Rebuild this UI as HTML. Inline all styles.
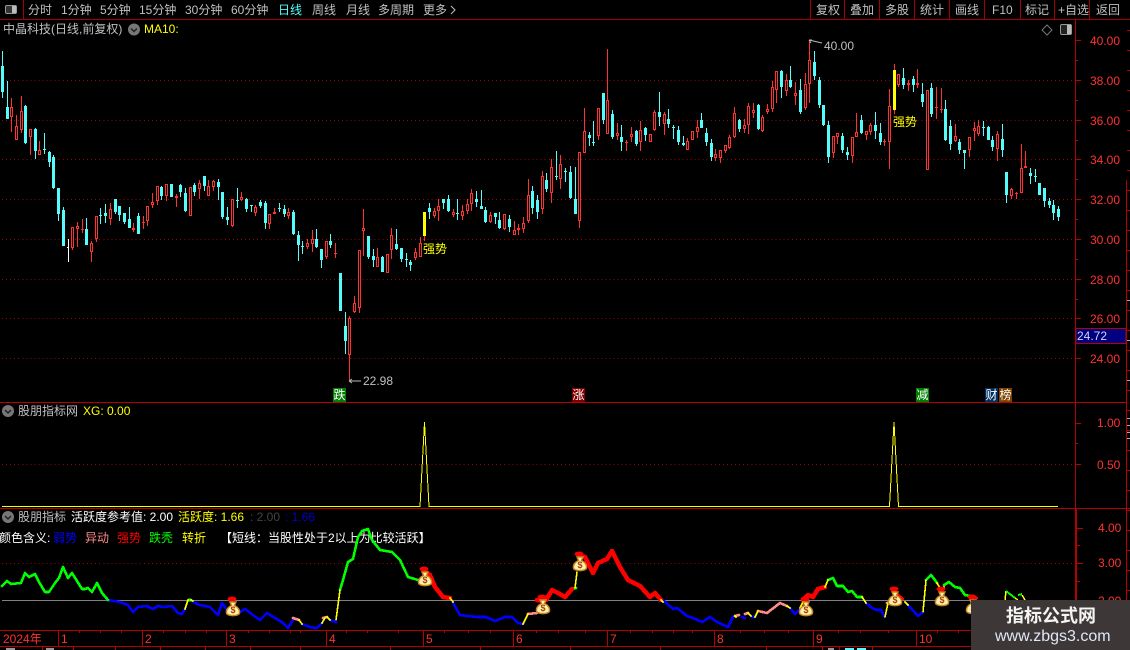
<!DOCTYPE html>
<html><head><meta charset="utf-8"><title>中晶科技</title>
<style>
html,body{margin:0;padding:0;background:#000;width:1130px;height:650px;overflow:hidden}
svg{display:block}
text{font-family:"Liberation Sans","WenQuanYi Zen Hei","Noto Sans CJK SC",sans-serif;font-size:12px;fill:#c0c0c0}
.p{fill:#ff3232}
.y{fill:#ffff00}
.w{fill:#fff}
</style></head><body>
<svg width="1130" height="650" viewBox="0 0 1130 650" xmlns="http://www.w3.org/2000/svg">
<rect width="1130" height="650" fill="#000"/>
<defs>
<g id="c"><circle r="6" fill="#777"/><path d="M-3 -1L0 2L3 -1" fill="none" stroke="#222" stroke-width="1.5"/></g>
<g id="b"><ellipse cx="-1" cy="-10" rx="4.5" ry="2.4" fill="#f00"/><path d="M-3 -7H3L1.5 -3.5C5 -2 7 1 6.5 4C6 7.5 -6 7.5 -6.5 4C-7 1 -5 -2 -1.5 -3.5Z" fill="#fff0b0" stroke="#c8861c" stroke-width="1.4"/></g>
</defs>

<!-- toolbar -->
<g shape-rendering="crispEdges" stroke="#a80000" fill="none">
<path d="M0 19.5H1130M23.5 0V19M810.5 0V19M844.5 0V19M879.5 0V19M914.5 0V19M949.5 0V19M984.5 0V19M1020.5 0V19M1054.5 0V19M1089.5 0V19"/>
</g>
<rect x="5.5" y="5.5" width="11" height="8" rx="1.5" fill="#333" stroke="#999"/><rect x="12" y="6" width="4" height="7" fill="#bbb"/>
<text x="28" y="14">分时</text><text x="61" y="14">1分钟</text><text x="100" y="14">5分钟</text><text x="139" y="14">15分钟</text><text x="185" y="14">30分钟</text><text x="231" y="14">60分钟</text>
<text x="278" y="14" fill="#54fcfc" style="fill:#54fcfc">日线</text><text x="312" y="14">周线</text><text x="346" y="14">月线</text><text x="378" y="14">多周期</text><text x="423" y="14">更多</text>
<path d="M451 6L455 10L451 14" fill="none" stroke="#c0c0c0"/>
<text x="816" y="14">复权</text><text x="850" y="14">叠加</text><text x="885" y="14">多股</text><text x="920" y="14">统计</text><text x="955" y="14">画线</text><text x="992" y="14">F10</text><text x="1025" y="14">标记</text><text x="1058" y="14">+自选</text><text x="1096" y="14">返回</text>

<!-- header -->
<text x="3" y="33">中晶科技(日线,前复权)</text>
<use href="#c" x="134" y="29.5"/>
<text x="144" y="33" class="y">MA10:</text>
<path d="M1047 25L1052 30L1047 35L1042 30Z" fill="none" stroke="#777"/>
<rect x="1060.5" y="24.5" width="11" height="10" rx="1.5" fill="#222" stroke="#999"/><rect x="1067" y="25" width="4" height="9" fill="#bbb"/>

<!-- grid -->
<g fill="none" stroke="#a00000" stroke-dasharray="1 3.05" shape-rendering="crispEdges">
<path d="M2 80.5H1075M2 120.5H1075M2 159.5H1075M2 199.5H1075M2 239.5H1075M2 279.5H1075M2 318.5H1075M2 358.5H1075M2 464.5H1075M2 563.5H1075"/>
</g>
<path d="M2 600.5H971" stroke="#808080" shape-rendering="crispEdges"/>

<!-- frame -->
<g fill="none" stroke="#b80000" shape-rendering="crispEdges">
<path d="M1075.5 20V508M1126.5 180V630M0 402.5H1126M0 508.5H1130M0 630.5H971M0 646.5H971"/>
<path stroke-width="2" d="M1076 508V630"/>
<path d="M1075 40.5h6M1075 60.5h3M1075 80.5h6M1075 100.5h3M1075 120.5h6M1075 140.5h3M1075 159.5h6M1075 179.5h3M1075 199.5h6M1075 219.5h3M1075 239.5h6M1075 259.5h3M1075 279.5h6M1075 299.5h3M1075 318.5h6M1075 358.5h6M1075 423.5h6M1075 443.5h3M1075 464.5h6M1077 528.5h6M1077 545.5h3M1077 563.5h6M1077 581.5h3M1077 600.5h6"/>
<path stroke-dasharray="1 19" stroke-width="3" d="M1128.5 30V600"/>
<path d="M58.5 630V646M142.5 630V646M226.5 630V646M326.5 630V646M423.5 630V646M513.5 630V646M607.5 630V646M714.5 630V646M813.5 630V646M916.5 630V646"/>
<path d="M79.5 631v2M100.5 631v2M121.5 631v2M163.5 631v2M185.5 631v2M206.5 631v2M248.5 631v2M269.5 631v2M290.5 631v2M300.5 631v2M346.5 631v2M367.5 631v2M398.5 631v2M444.5 631v2M468.5 631v2M490.5 631v2M536.5 631v2M558.5 631v2M585.5 631v2M630.5 631v2M652.5 631v2M673.5 631v2M692.5 631v2M740.5 631v2M764.5 631v2M788.5 631v2M838.5 631v2M860.5 631v2M888.5 631v2M937.5 631v2M958.5 631v2"/>
<path d="M42.5 647v3M73.5 647v3M115.5 647v3M160.5 647v3M205.5 647v3M250.5 647v3M300.5 647v3M390.5 647v3M480.5 647v3M570.5 647v3M660.5 647v3M766.5 647v3M822.5 647v3M839.5 647v3M872.5 647v3"/>
</g>
<path d="M1127 418.5h3M1127 425.5h3M1127 432.5h3M1127 438.5h3M1127 380.5h3M1127 340.5h3M1127 300.5h3" stroke="#aaa" shape-rendering="crispEdges"/>
<g shape-rendering="crispEdges"><rect x="6" y="648" width="9" height="2" fill="#999"/><rect x="46" y="648" width="8" height="2" fill="#999"/><rect x="828" y="648" width="6" height="2" fill="#999"/><rect x="845" y="648" width="9" height="2" fill="#54fcfc"/><rect x="857" y="648" width="9" height="2" fill="#54fcfc"/></g>

<!-- cyan candles -->
<path shape-rendering="crispEdges" fill="#54fcfc" stroke="#54fcfc" d="M2.5 51V98M1.5 66.5h2V91.5h-2zM7.5 81V119M6.5 107.5h2V118.5h-2zM25.5 105V144M24.5 106.5h2V142.5h-2zM35.5 128V159M34.5 129.5h2V150.5h-2zM44.5 133V154M43 149.5h3M49.5 151V167M48.5 152.5h2V161.5h-2zM53.5 155V189M52.5 157.5h2V187.5h-2zM58.5 188V221M57.5 188.5h2V213.5h-2zM63.5 207V246M62.5 210.5h2V245.5h-2zM86.5 218V245M85.5 229.5h2V244.5h-2zM100.5 208V224M99 215.5h3M105.5 204V223M104.5 213.5h2V215.5h-2zM115.5 199V214M114.5 199.5h2V211.5h-2zM119.5 206V221M118.5 206.5h2V214.5h-2zM124.5 213V224M123.5 213.5h2V221.5h-2zM129.5 207V228M128.5 219.5h2V227.5h-2zM138.5 213V234M137.5 216.5h2V233.5h-2zM161.5 186V200M160.5 187.5h2V195.5h-2zM171.5 184V197M170.5 184.5h2V196.5h-2zM180.5 184V197M179.5 185.5h2V191.5h-2zM185.5 188V212M184.5 193.5h2V210.5h-2zM194.5 183V196M193.5 185.5h2V191.5h-2zM204.5 176V191M203.5 176.5h2V185.5h-2zM218.5 179V200M217.5 182.5h2V186.5h-2zM222.5 192V219M221.5 192.5h2V216.5h-2zM227.5 207V225M226.5 217.5h2V219.5h-2zM237.5 188V208M236 200.5h3M246.5 198V212M245.5 199.5h2V208.5h-2zM251.5 205V212M250 205.5h3M260.5 200V208M259.5 202.5h2V205.5h-2zM265.5 201V229M264.5 203.5h2V222.5h-2zM279.5 203V212M278 208.5h3M284.5 205V217M283.5 209.5h2V213.5h-2zM293.5 210V235M292.5 212.5h2V233.5h-2zM298.5 231V261M297.5 235.5h2V244.5h-2zM302.5 241V254M301 246.5h3M316.5 229V248M315.5 239.5h2V246.5h-2zM321.5 249V268M320.5 249.5h2V259.5h-2zM330.5 234V248M329.5 241.5h2V244.5h-2zM340.5 273V311M339.5 273.5h2V310.5h-2zM345.5 312V354M344.5 326.5h2V340.5h-2zM368.5 236V259M367.5 236.5h2V256.5h-2zM373.5 249V267M372.5 256.5h2V259.5h-2zM382.5 256V272M381.5 257.5h2V271.5h-2zM396.5 229V250M395.5 244.5h2V248.5h-2zM401.5 248V262M400.5 248.5h2V258.5h-2zM406.5 253V267M405 259.5h3M410.5 260V271M409.5 262.5h2V264.5h-2zM429.5 203V219M428.5 208.5h2V211.5h-2zM443.5 199V209M442.5 199.5h2V202.5h-2zM448.5 195V212M447.5 199.5h2V210.5h-2zM457.5 199V220M456 213.5h3M476.5 191V207M475.5 199.5h2V201.5h-2zM481.5 190V209M480.5 206.5h2V208.5h-2zM485.5 207V223M484.5 210.5h2V221.5h-2zM495.5 213V224M494.5 213.5h2V216.5h-2zM499.5 212V229M498.5 220.5h2V227.5h-2zM509.5 215V232M508.5 219.5h2V226.5h-2zM532.5 186V214M531.5 191.5h2V207.5h-2zM537.5 195V219M536.5 200.5h2V211.5h-2zM546.5 173V192M545.5 180.5h2V188.5h-2zM556.5 151V180M555 176.5h3M565.5 168V182M564 171.5h3M570.5 166V199M569.5 172.5h2V197.5h-2zM575.5 167V214M574.5 199.5h2V213.5h-2zM589.5 132V146M588.5 135.5h2V137.5h-2zM593.5 121V146M592 142.5h3M603.5 93V124M602.5 93.5h2V119.5h-2zM612.5 110V139M611.5 114.5h2V136.5h-2zM621.5 125V151M620.5 137.5h2V141.5h-2zM636.5 130V146M635.5 131.5h2V143.5h-2zM645.5 127V141M644.5 128.5h2V134.5h-2zM659.5 92V126M658.5 112.5h2V116.5h-2zM668.5 109V128M667.5 119.5h2V123.5h-2zM673.5 125V139M672 127.5h3M678.5 126V145M677.5 130.5h2V141.5h-2zM683.5 136V146M682.5 143.5h2V144.5h-2zM701.5 113V128M700.5 120.5h2V127.5h-2zM706.5 128V146M705.5 133.5h2V141.5h-2zM711.5 139V161M710.5 143.5h2V156.5h-2zM739.5 119V132M738.5 120.5h2V128.5h-2zM758.5 104V130M757.5 105.5h2V128.5h-2zM781.5 70V98M780.5 71.5h2V86.5h-2zM790.5 66V88M789.5 80.5h2V86.5h-2zM800.5 79V114M799.5 90.5h2V111.5h-2zM814.5 51V80M813.5 62.5h2V75.5h-2zM819.5 77V108M818.5 80.5h2V104.5h-2zM823.5 105V126M822.5 105.5h2V124.5h-2zM828.5 121V163M827.5 125.5h2V156.5h-2zM842.5 133V153M841.5 136.5h2V149.5h-2zM847.5 147V160M846.5 152.5h2V154.5h-2zM861.5 115V134M860.5 120.5h2V132.5h-2zM875.5 112V139M874.5 125.5h2V130.5h-2zM880.5 123V145M879.5 133.5h2V141.5h-2zM903.5 68V89M902.5 78.5h2V84.5h-2zM913.5 76V92M912.5 79.5h2V84.5h-2zM922.5 83V107M921.5 94.5h2V101.5h-2zM931.5 83V117M930.5 88.5h2V113.5h-2zM945.5 100V141M944.5 109.5h2V139.5h-2zM950.5 120V150M949.5 126.5h2V143.5h-2zM959.5 139V154M958.5 142.5h2V149.5h-2zM964.5 150V169M963.5 150.5h2V152.5h-2zM983.5 121V136M982 127.5h3M988.5 126V140M987.5 127.5h2V139.5h-2zM992.5 136V151M991.5 140.5h2V146.5h-2zM1002.5 124V157M1001.5 139.5h2V149.5h-2zM1006.5 172V203M1005.5 172.5h2V194.5h-2zM1030.5 168V184M1029.5 173.5h2V175.5h-2zM1035.5 169V182M1034 176.5h3M1039.5 183V195M1038.5 183.5h2V194.5h-2zM1044.5 188V207M1043.5 188.5h2V200.5h-2zM1049.5 198V208M1048.5 201.5h2V204.5h-2zM1053.5 200V220M1052.5 205.5h2V212.5h-2zM1058.5 206V221M1057.5 209.5h2V216.5h-2z"/>

<!-- white doji -->
<path shape-rendering="crispEdges" stroke="#fff" fill="none" d="M68.5 239V262M67 247.5h2"/>

<!-- red candles -->
<path shape-rendering="crispEdges" fill="#000" stroke="#ff3232" d="M11.5 98V107M11.5 117V132M10.5 107.5h2V116.5h-2zM16.5 115V126M15.5 126.5h2V139.5h-2zM21.5 96V111M21.5 130V133M20.5 111.5h2V129.5h-2zM30.5 137V155M29.5 129.5h2V136.5h-2zM39.5 141V150M38.5 150.5h2V154.5h-2zM72.5 248V250M71.5 227.5h2V247.5h-2zM77.5 222V226M77.5 229V247M76.5 226.5h2V228.5h-2zM82.5 219V233M81 229.5h3M91.5 241V243M91.5 252V262M90.5 243.5h2V251.5h-2zM96.5 239V242M95.5 216.5h2V238.5h-2zM110.5 203V209M110.5 219V225M109.5 209.5h2V218.5h-2zM133.5 223V228M133.5 230V232M132.5 228.5h2V229.5h-2zM143.5 216V229M142 222.5h3M147.5 221V226M146.5 206.5h2V220.5h-2zM152.5 193V202M152.5 205V208M151.5 202.5h2V204.5h-2zM157.5 201V205M156.5 186.5h2V200.5h-2zM166.5 196V201M165.5 184.5h2V195.5h-2zM176.5 194V196M176.5 198V207M175.5 196.5h2V197.5h-2zM189.5 187.5h2V215.5h-2zM199.5 180V183M199.5 189V199M198.5 183.5h2V188.5h-2zM208.5 180V186M207.5 186.5h2V195.5h-2zM213.5 180V181M213.5 187V191M212.5 181.5h2V186.5h-2zM232.5 226V227M231.5 199.5h2V225.5h-2zM241.5 192V197M241.5 200V201M240.5 197.5h2V199.5h-2zM255.5 205V207M255.5 213V216M254.5 207.5h2V212.5h-2zM269.5 224V229M268.5 214.5h2V223.5h-2zM274.5 208V212M273.5 212.5h2V213.5h-2zM288.5 208V212M288.5 216V219M287.5 212.5h2V215.5h-2zM307.5 239V243M307.5 247V249M306.5 243.5h2V246.5h-2zM312.5 230V239M312.5 244V252M311.5 239.5h2V243.5h-2zM326.5 257V259M325.5 241.5h2V256.5h-2zM335.5 243V258M334 253.5h3M349.5 316V318M349.5 355V380M348.5 318.5h2V354.5h-2zM354.5 296V303M354.5 312V313M353.5 303.5h2V311.5h-2zM359.5 308V313M358.5 250.5h2V307.5h-2zM363.5 209V228M363.5 231V256M362.5 228.5h2V230.5h-2zM377.5 248V257M376.5 257.5h2V266.5h-2zM386.5 254.5h2V272.5h-2zM391.5 228V235M391.5 250V259M390.5 235.5h2V249.5h-2zM415.5 248V252M415.5 258V260M414.5 252.5h2V257.5h-2zM420.5 237V243M419.5 243.5h2V256.5h-2zM424.5 236V241M434.5 208V211M434.5 216V218M433.5 211.5h2V215.5h-2zM438.5 199V206M438.5 211V221M437.5 206.5h2V210.5h-2zM453.5 209V212M453.5 215V217M452.5 212.5h2V214.5h-2zM462.5 205V211M462.5 216V220M461.5 211.5h2V215.5h-2zM467.5 199V204M467.5 211V214M466.5 204.5h2V210.5h-2zM471.5 189V193M471.5 204V211M470.5 193.5h2V203.5h-2zM490.5 212V215M490.5 222V223M489.5 215.5h2V221.5h-2zM504.5 229V230M503.5 214.5h2V228.5h-2zM514.5 221V230M513.5 230.5h2V234.5h-2zM518.5 224V228M518.5 229V235M517.5 228.5h2V229.5h-2zM523.5 217V223M523.5 229V233M522.5 223.5h2V228.5h-2zM528.5 179V195M528.5 221V223M527.5 195.5h2V220.5h-2zM542.5 171V176M542.5 209V214M541.5 176.5h2V208.5h-2zM551.5 159V167M551.5 193V203M550.5 167.5h2V192.5h-2zM560.5 155V164M560.5 179V189M559.5 164.5h2V178.5h-2zM579.5 221V228M578.5 152.5h2V220.5h-2zM584.5 108V131M583.5 131.5h2V152.5h-2zM598.5 136V140M597.5 108.5h2V135.5h-2zM607.5 49V100M606.5 100.5h2V133.5h-2zM617.5 123V133M617.5 136V140M616.5 133.5h2V135.5h-2zM626.5 140V151M625 142.5h3M631.5 127V134M631.5 137V142M630.5 134.5h2V136.5h-2zM640.5 121V130M640.5 142V151M639.5 130.5h2V141.5h-2zM649.5 134.5h2V141.5h-2zM654.5 110V112M654.5 130V131M653.5 112.5h2V129.5h-2zM664.5 112V114M664.5 124V135M663.5 114.5h2V123.5h-2zM687.5 138V141M686.5 141.5h2V149.5h-2zM691.5 131.5h2V139.5h-2zM697.5 120V127M697.5 132V138M696.5 127.5h2V131.5h-2zM715.5 149V154M715.5 158V161M714.5 154.5h2V157.5h-2zM720.5 158V163M719.5 150.5h2V157.5h-2zM725.5 151V153M724.5 145.5h2V150.5h-2zM729.5 135V137M729.5 148V149M728.5 137.5h2V147.5h-2zM734.5 107V113M734.5 137V138M733.5 113.5h2V136.5h-2zM744.5 119V125M744.5 129V133M743.5 125.5h2V128.5h-2zM748.5 103V106M748.5 125V134M747.5 106.5h2V124.5h-2zM753.5 103V110M753.5 113V118M752.5 110.5h2V112.5h-2zM762.5 115V117M762.5 131V132M761.5 117.5h2V130.5h-2zM767.5 104V109M767.5 112V114M766.5 109.5h2V111.5h-2zM772.5 81V87M772.5 109V112M771.5 87.5h2V108.5h-2zM776.5 90V103M775.5 71.5h2V89.5h-2zM786.5 74V80M786.5 91V96M785.5 80.5h2V90.5h-2zM795.5 82V93M795.5 96V105M794.5 93.5h2V95.5h-2zM805.5 73V84M805.5 108V110M804.5 84.5h2V107.5h-2zM809.5 40V60M809.5 84V103M808.5 60.5h2V83.5h-2zM833.5 153V158M832.5 136.5h2V152.5h-2zM837.5 137V144M836.5 133.5h2V136.5h-2zM852.5 156V163M851.5 137.5h2V155.5h-2zM856.5 113V132M855.5 132.5h2V136.5h-2zM866.5 135V140M865.5 131.5h2V134.5h-2zM870.5 123V125M870.5 132V135M869.5 125.5h2V131.5h-2zM884.5 139V146M883 141.5h3M889.5 89V106M889.5 142V169M888.5 106.5h2V141.5h-2zM894.5 64V70M894.5 110V114M898.5 85V87M897.5 74.5h2V84.5h-2zM908.5 80V83M908.5 85V91M907.5 83.5h2V84.5h-2zM917.5 69V83M917.5 85V88M916.5 83.5h2V84.5h-2zM926.5 90.5h2V169.5h-2zM936.5 87V119M935 107.5h3M941.5 88V113M940 109.5h3M955.5 124V136M955.5 141V142M954.5 136.5h2V140.5h-2zM969.5 150V157M968.5 137.5h2V149.5h-2zM974.5 122V128M974.5 131V141M973.5 128.5h2V130.5h-2zM978.5 120V126M978.5 134V136M977.5 126.5h2V133.5h-2zM997.5 131V134M997.5 149V161M996.5 134.5h2V148.5h-2zM1011.5 188V189M1011.5 196V199M1010.5 189.5h2V195.5h-2zM1016.5 192V199M1015 193.5h3M1021.5 144V168M1020.5 168.5h2V192.5h-2zM1025.5 151V166M1024.5 166.5h2V167.5h-2z"/>

<!-- yellow strong bars -->
<g shape-rendering="crispEdges" fill="#ffff00"><rect x="423" y="212" width="3" height="24"/><rect x="893" y="70" width="3" height="40"/></g>
<text x="423" y="253" class="y">强势</text><text x="893" y="126" class="y">强势</text>

<!-- extreme markers -->
<path d="M822 43L809 40M809 40h3M809 40l2 3M361 381H349M349 381l3 -2M349 381l3 2" fill="none" stroke="#bbb"/>
<text x="824" y="50">40.00</text><text x="363" y="385">22.98</text>

<!-- labels -->
<g class="lab">
<text x="1090" y="45" class="p">40.00</text><text x="1090" y="85" class="p">38.00</text><text x="1090" y="125" class="p">36.00</text><text x="1090" y="164" class="p">34.00</text><text x="1090" y="204" class="p">32.00</text><text x="1090" y="244" class="p">30.00</text><text x="1090" y="284" class="p">28.00</text><text x="1090" y="323" class="p">26.00</text><text x="1090" y="363" class="p">24.00</text>
<text x="1097" y="427" class="p">1.00</text><text x="1097" y="469" class="p">0.50</text>
<text x="1098" y="532" class="p">4.00</text><text x="1098" y="567" class="p">3.00</text><text x="1098" y="605" class="p">2.00</text>
</g>
<rect x="1076" y="328.5" width="50" height="15" fill="#000080" stroke="#b80000" shape-rendering="crispEdges"/>
<text x="1077" y="340" style="fill:#cdd6f4">24.72</text>

<!-- tags -->
<g shape-rendering="crispEdges"><rect x="333" y="388" width="13" height="14" fill="#008000"/><rect x="572" y="388" width="13" height="14" fill="#800000"/><rect x="916" y="388" width="13" height="14" fill="#008000"/><rect x="985" y="388" width="13" height="14" fill="#003060"/><rect x="999" y="388" width="13" height="14" fill="#804000"/></g>
<text x="333.5" y="399" class="w">跌</text><text x="572.5" y="399" class="w">涨</text><text x="916.5" y="399" class="w">减</text><text x="985.5" y="399" class="w">财</text><text x="999.5" y="399" class="w">榜</text>

<!-- panel 2 -->
<use href="#c" x="8" y="411"/>
<text x="18" y="415">股朋指标网</text><text x="83" y="415" class="y">XG: 0.00</text>
<path shape-rendering="crispEdges" fill="none" stroke="#ffff00" d="M2 506.5H420L424.5 422L429 506.5H889.5L894 422L898.5 506.5H1058"/>

<!-- panel 3 -->
<use href="#c" x="8" y="517"/>
<text x="18" y="521">股朋指标</text><text x="71" y="521" class="w">活跃度参考值: 2.00</text><text x="178" y="521" class="y">活跃度: 1.66</text>
<text x="250" y="521" style="fill:#444">: 2.00</text><text x="285" y="521" style="fill:#0000c8">: 1.66</text>
<text x="-1" y="542" class="w">颜色含义:</text><text x="53" y="542" style="fill:#0000ff">弱势</text><text x="85" y="542" style="fill:#ff8888">异动</text><text x="117" y="542" style="fill:#ff0000">强势</text><text x="149" y="542" style="fill:#00ff00">跌秃</text><text x="182" y="542" class="y">转折</text>
<text x="220" y="542" class="w">【短线：当股性处于2以上为比较活跃】</text>

<!-- indicator curve -->
<g fill="none" stroke-linejoin="round" stroke-linecap="round" shape-rendering="crispEdges">
<path stroke="#0000ff" stroke-width="2.6" d="M108 600L120 602L128 605L133 612L138 607L147 606L153 609L158 606L163 607L172 606L178 613L182 614L185 609M193 602L200 605L210 607L218 615L222 603L225 607L227 610L240 612L245 609L253 615L260 620L267 613L275 618L283 623L288 628L293 620M302 624L310 627L317 628L322 623M330 620L336 622M453 603L460 615L467 616L478 617L486 617L495 621L505 617L512 617L518 623L523 624M663 600L673 609L677 608L687 616L693 618L702 622L710 617L717 622L728 627L733 617M742 617L745 618M752 617L755 617M790 608L795 614L799 610M866 603L872 608L877 610L881 610L885 617M908 605L918 616L923 612"/>
<path stroke="#00ff00" stroke-width="2.6" d="M2 586L7 581L11 584L21 583L25 573L29 577L35 574L39 582L45 592L49 592L55 583L59 578L63 567L68 578L72 573L82 589L85 589L88 588L92 592L97 583L102 593L108 600M188.5 600L191 600M340 590L343 580L348 562L353 559L358 537L362 531L368 529L372 540L380 550L392 552L400 560L408 577L418 580M572 589L576 588M828 580L833 578L837 586L843 586L848 592L852 591L857 597L862 597M926 580L931 575L935 580L937 583M944 585L949 582L955 587L960 588L965 595L970 596"/>
<path stroke="#ff0000" stroke-width="4.5" d="M425 572L430 575L435 587L443 597L450 598M537 600L546 600L552 590L558 593L565 597L572 589M580 556L585 557L593 573L598 563L607 559L612 551L620 567L628 580L640 586L650 597L655 593L661 600M803 600L808 595L813 597L818 589L825 587"/>
<path stroke="#ff0000" stroke-width="2.5" d="M893 590L903 599M938 589L942 590M970 597L977 598"/>
<path stroke="#ff8a8a" stroke-width="2.6" d="M293 618L299 620M323 618L327 617M528 614L537 613M735 616L739 615M745 614L748 613M758 611L767 613L780 603L787 606M887 603L888 603"/>
<path stroke="#ffff00" stroke-width="1.6" d="M185 609L188 600M191 600L193 601M299 620L302 624M322 623L325 618M327 617L330 620M336 620L340 590M450 598L453 602M523 624L528 614M575 588L577 572M661 600L663 602M736 617L735 616M748 613L751 616M755 617L758 611M787 606L790 608M800 608L803 602M825 587L828 580M862 597L866 603M885 617L888 603M905 602L908 605M923 612L926 580M937 583L940 588M942 589L944 587"/>
</g>

<!-- money bags -->
<use href="#b" x="233" y="609"/><text x="233" y="613" text-anchor="middle" style="font-size:9px;font-weight:bold;fill:#a04000">$</text>
<use href="#b" x="425" y="579"/><text x="425" y="583" text-anchor="middle" style="font-size:9px;font-weight:bold;fill:#a04000">$</text>
<use href="#b" x="543" y="607"/><text x="543" y="611" text-anchor="middle" style="font-size:9px;font-weight:bold;fill:#a04000">$</text>
<use href="#b" x="580" y="564"/><text x="580" y="568" text-anchor="middle" style="font-size:9px;font-weight:bold;fill:#a04000">$</text>
<use href="#b" x="806" y="609"/><text x="806" y="613" text-anchor="middle" style="font-size:9px;font-weight:bold;fill:#a04000">$</text>
<use href="#b" x="895" y="599"/><text x="895" y="603" text-anchor="middle" style="font-size:9px;font-weight:bold;fill:#a04000">$</text>
<use href="#b" x="942" y="599"/><text x="942" y="603" text-anchor="middle" style="font-size:9px;font-weight:bold;fill:#a04000">$</text>
<use href="#b" x="973" y="607"/><text x="973" y="611" text-anchor="middle" style="font-size:9px;font-weight:bold;fill:#a04000">$</text>

<!-- date axis -->
<text x="3" y="643" class="p">2024年</text><text x="61" y="643" class="p">1</text><text x="145" y="643" class="p">2</text><text x="229" y="643" class="p">3</text><text x="329" y="643" class="p">4</text><text x="426" y="643" class="p">5</text><text x="516" y="643" class="p">6</text><text x="610" y="643" class="p">7</text><text x="717" y="643" class="p">8</text><text x="816" y="643" class="p">9</text><text x="919" y="643" class="p">10</text>

<!-- trailing yellow/green after watermark top -->
<g fill="none" shape-rendering="crispEdges" stroke-width="2"><path stroke="#ffff00" stroke-width="1.5" d="M1005 600L1006 591M1015 598L1018 600M1022 595L1025 600"/><path stroke="#00ff00" d="M1006 591L1015 598M1018 595L1022 594"/></g>

<!-- watermark -->
<rect x="971" y="600" width="159" height="50" fill="#3d3837"/>
<text x="1006" y="622" style="font-family:'Noto Sans CJK SC','WenQuanYi Zen Hei',sans-serif;font-size:18px;font-weight:bold;fill:#f4f4f4">指标公式网</text>
<text x="995" y="641" style="font-size:16px;fill:#dfe8f8">www.zbgs3.com</text>
</svg>
</body></html>
